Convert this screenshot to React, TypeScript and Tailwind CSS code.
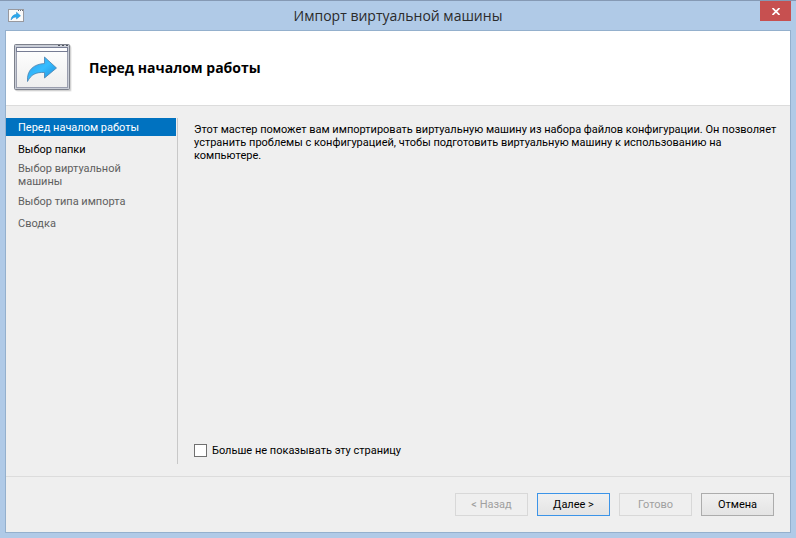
import { useState } from 'react'

interface Step {
  label: string
  state: 'current' | 'available' | 'pending'
}

const steps: Step[] = [
  { label: 'Перед началом работы', state: 'current' },
  { label: 'Выбор папки', state: 'available' },
  { label: 'Выбор виртуальной машины', state: 'pending' },
  { label: 'Выбор типа импорта', state: 'pending' },
  { label: 'Сводка', state: 'pending' },
]

const stepStyles = {
  current: 'bg-[#0072c0] text-white',
  available: 'text-black',
  pending: 'text-[#606060]',
}

function SmallIcon() {
  return (
    <svg width="16" height="13" viewBox="0 0 16 13" aria-hidden="true">
      <rect x="0.5" y="0.5" width="15" height="12" fill="#fafafa" stroke="#98999f" />
      <path d="M10 1.5h1M12 1.5h1M14 1.5h1" stroke="#6b6f7a" />
      <path d="M3 11C3.3 7.5 5.5 5.5 8.5 5.3V3.2L12.5 6.8L8.5 10V8C6 8 4.5 9 3 11Z" fill="#29a9ee" stroke="#2388cc" strokeWidth="0.5" />
    </svg>
  )
}

function LargeIcon() {
  return (
    <svg width="58" height="48" viewBox="0 0 58 48" aria-hidden="true">
      <defs>
        <linearGradient id="pane" x1="0" y1="0" x2="0" y2="1">
          <stop offset="0" stopColor="#ffffff" />
          <stop offset="1" stopColor="#eeeeee" />
        </linearGradient>
        <linearGradient id="arrow" x1="0" y1="0" x2="1" y2="1">
          <stop offset="0" stopColor="#2f9be6" />
          <stop offset="0.5" stopColor="#35bdff" />
          <stop offset="1" stopColor="#1c86d4" />
        </linearGradient>
      </defs>
      <rect x="2" y="2" width="56" height="46" rx="2" fill="#000" opacity="0.06" />
      <rect x="1" y="1" width="56" height="46" rx="1" fill="#000" opacity="0.12" />
      <rect x="0.5" y="0.5" width="55" height="45" rx="1" fill="#c9cdd6" stroke="#7d818c" />
      <path d="M44 1.5h2M48 1.5h2M52 1.5h2" stroke="#50545e" />
      <rect x="2.5" y="3.5" width="51" height="40" fill="url(#pane)" stroke="#9a9eae" />
      <rect x="2.5" y="3.5" width="51" height="4" fill="#fdfdfe" stroke="#777d94" />
      <path d="M13.5 37.5C12.5 26 20 20 30.500 19.500V13L42.500 24L30.500 34V28.500C22 28 17 30.500 13.500 37.500Z" fill="url(#arrow)" stroke="#4b82ad" strokeWidth="0.8" />
    </svg>
  )
}

const buttonBase = 'h-[23px] w-[73px] border text-center'
const buttonEnabled = 'bg-linear-to-b from-[#f0f0f0] to-[#e4e4e4] text-black'
const buttonDisabled = 'border-[#d8d8d8] bg-[#efefef] text-[#a0a0a0]'

export default function App() {
  const [hidePage, setHidePage] = useState(false)

  return (
    <div className="flex min-h-screen flex-col border-t border-[#8599b4] bg-[#b0cae7] px-[5px] pb-[5px] font-['Roboto',sans-serif] text-[11px] leading-[13px] text-black">
      {/* Title bar */}
      <div className="grid h-[29px] shrink-0 grid-cols-[1fr_auto_1fr]">
        <div className="self-center pl-[3px]">
          <SmallIcon />
        </div>
        <h1 className="self-center font-['Open_Sans',sans-serif] text-sm leading-5 text-[#2b2b2b]">
          Импорт виртуальной машины
        </h1>
        <button type="button" aria-label="Закрыть" className="flex h-5 w-[31px] items-center justify-center justify-self-end bg-[#c75050]">
          <svg width="8" height="7" viewBox="0 0 8 7" aria-hidden="true">
            <path d="M0.5 0L7.5 7M7.5 0L0.5 7" stroke="#fff" strokeWidth="1.7" />
          </svg>
        </button>
      </div>

      <div className="flex flex-1 flex-col border border-[#94b0cd] bg-[#efefef]">
        {/* Header */}
        <header className="flex h-[75px] shrink-0 items-center gap-[17px] border-b border-[#dcdcdc] bg-white pl-2">
          <LargeIcon />
          <h2 className="font-['Open_Sans',sans-serif] text-sm leading-5 font-bold">Перед началом работы</h2>
        </header>

        <div className="flex flex-1 py-3">
          {/* Steps */}
          <nav className="w-[172px] shrink-0 border-r border-[#c8c8c8] pr-px">
            <ol className="flex flex-col gap-1">
              {steps.map((step) => (
                <li
                  key={step.label}
                  aria-current={step.state === 'current' ? 'step' : undefined}
                  className={`flex min-h-[18px] items-center pr-8 pl-3 ${stepStyles[step.state]}`}
                >
                  {step.label}
                </li>
              ))}
            </ol>
          </nav>

          <main className="flex flex-1 flex-col justify-between pt-[5px] pr-2 pb-[7px] pl-4">
            <p>
              Этот мастер поможет вам импортировать виртуальную машину из набора файлов конфигурации. Он позволяет
              устранить проблемы с конфигурацией, чтобы подготовить виртуальную машину к использованию на
              компьютере.
            </p>
            <label className="flex items-center gap-[5px]">
              <input
                type="checkbox"
                checked={hidePage}
                onChange={(e) => setHidePage(e.target.checked)}
                className="size-[13px] appearance-none border border-[#707070] bg-white checked:bg-[#0072c0]"
              />
              Больше не показывать эту страницу
            </label>
          </main>
        </div>

        {/* Buttons */}
        <footer className="flex h-14 shrink-0 justify-end gap-[9px] border-t border-[#dcdcdc] pt-4 pr-4">
          <button type="button" disabled className={`${buttonBase} ${buttonDisabled}`}>&lt; Назад</button>
          <button type="button" className={`${buttonBase} ${buttonEnabled} border-[#3c94e8]`}>Далее &gt;</button>
          <button type="button" disabled className={`${buttonBase} ${buttonDisabled}`}>Готово</button>
          <button type="button" className={`${buttonBase} ${buttonEnabled} border-[#acacac]`}>Отмена</button>
        </footer>
      </div>
    </div>
  )
}
